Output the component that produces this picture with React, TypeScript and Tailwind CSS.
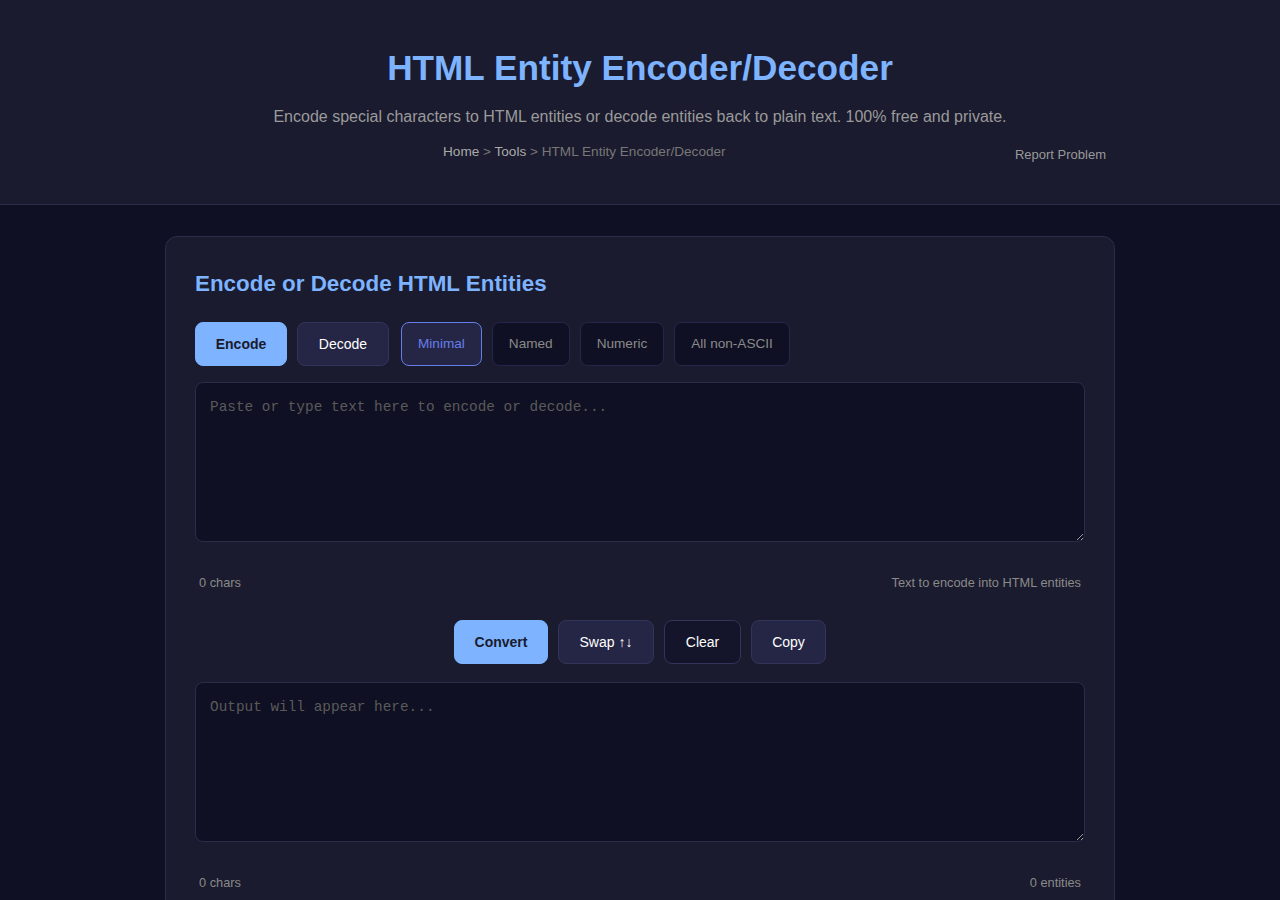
import React, { useState } from 'react';

type Mode = 'encode' | 'decode';
type Scope = 'minimal' | 'named' | 'numeric' | 'ascii';

const scopes: { id: Scope; label: string }[] = [
  { id: 'minimal', label: 'Minimal' },
  { id: 'named', label: 'Named' },
  { id: 'numeric', label: 'Numeric' },
  { id: 'ascii', label: 'All non-ASCII' },
];

const font = "font-['Liberation_Sans',Arial,sans-serif]";

const App: React.FC = () => {
  const [mode, setMode] = useState<Mode>('encode');
  const [scope, setScope] = useState<Scope>('minimal');
  const [input, setInput] = useState('');
  const [output, setOutput] = useState('');

  const entityCount = (output.match(/&[#a-zA-Z0-9]+;/g) || []).length;

  return (
    <div className={`min-h-screen bg-[#0f1023] ${font}`}>
      {/* 상단 헤더 */}
      <header className="bg-[#1a1b2e] border-b border-[#2b2c4c] pt-[48px] pb-[42px]">
        <h1 className="text-center text-[35.2px] leading-[40px] font-bold text-[#7db3ff]">
          HTML Entity Encoder/Decoder
        </h1>
        <p className="mt-[20px] text-center text-[16px] leading-[18px] text-[#9a9a9a]">
          Encode special characters to HTML entities or decode entities back to plain text. 100% free and private.
        </p>
        <div className="mx-auto mt-[18px] flex w-[932px] items-start">
          <nav className="ml-[269px] text-[13.6px] leading-[16px] text-[#777]">
            <a className="text-[#aaa]">Home</a> &gt; <a className="text-[#aaa]">Tools</a> &gt; HTML Entity Encoder/Decoder
          </nav>
          <a className="ml-auto mt-[3px] text-[13px] leading-[15px] text-[#999]">Report Problem</a>
        </div>
      </header>

      <main className="pt-[31px] pb-10">
        <section className="mx-auto w-[950px] rounded-[12px] border border-[#2b2c4c] bg-[#1a1b2e] px-[29px] pt-[34px] pb-8">
          <h2 className="text-[22.4px] leading-[26px] font-bold text-[#7db3ff]">Encode or Decode HTML Entities</h2>

          <div className="mt-[25px] flex items-center">
            <div className="flex gap-[10px]">
              <button
                onClick={() => setMode('encode')}
                className={`h-11 w-[92px] rounded-[8px] border text-[14px] ${
                  mode === 'encode'
                    ? 'border-[#7db3ff] bg-[#7db3ff] font-bold text-[#1a1b2e]'
                    : 'border-[#33345a] bg-[#252645] text-white'
                }`}
              >
                Encode
              </button>
              <button
                onClick={() => setMode('decode')}
                className={`h-11 w-[92px] rounded-[8px] border text-[14px] ${
                  mode === 'decode'
                    ? 'border-[#7db3ff] bg-[#7db3ff] font-bold text-[#1a1b2e]'
                    : 'border-[#33345a] bg-[#252645] text-white'
                }`}
              >
                Decode
              </button>
            </div>
            <div className="ml-3 flex gap-[10px]">
              {scopes.map(s => (
                <button
                  key={s.id}
                  onClick={() => setScope(s.id)}
                  className={`h-11 rounded-[8px] border px-4 text-[13.6px] ${
                    scope === s.id
                      ? 'border-[#667eea] bg-[#252645] text-[#667eea]'
                      : 'border-[#25264a] bg-[#0f1023] text-[#8a8a8a]'
                  }`}
                >
                  {s.label}
                </button>
              ))}
            </div>
          </div>

          <textarea
            value={input}
            onChange={e => setInput(e.target.value)}
            placeholder="Paste or type text here to encode or decode..."
            className="mt-4 block h-[160px] w-full rounded-[8px] border border-[#2b2c4c] bg-[#0f1023] px-[14px] py-[14px] font-['Liberation_Mono','Courier_New',monospace] text-[14.4px] leading-[20px] text-[#ddd] placeholder:text-[#5a5a5a] outline-none"
          />
          <div className="mt-[33px] flex justify-between px-1 text-[12.8px] leading-[15px] text-[#8a8a8a]">
            <span>{input.length} chars</span>
            <span>Text to encode into HTML entities</span>
          </div>

          <div className="mt-[30px] flex justify-center gap-[10px]">
            <button className="h-11 w-[94px] rounded-[8px] border border-[#7db3ff] bg-[#7db3ff] text-[14px] font-bold text-[#1a1b2e]">
              Convert
            </button>
            <button className="h-11 w-[96px] rounded-[8px] border border-[#33345a] bg-[#252645] text-[14px] text-white">
              Swap ↑↓
            </button>
            <button
              onClick={() => {
                setInput('');
                setOutput('');
              }}
              className="h-11 w-[77px] rounded-[8px] border border-[#33345a] bg-[#14152a] text-[14px] text-white"
            >
              Clear
            </button>
            <button className="h-11 w-[75px] rounded-[8px] border border-[#33345a] bg-[#252645] text-[14px] text-white">
              Copy
            </button>
          </div>

          <textarea
            value={output}
            readOnly
            placeholder="Output will appear here..."
            className="mt-[18px] block h-[160px] w-full rounded-[8px] border border-[#2b2c4c] bg-[#0f1023] px-[14px] py-[14px] font-['Liberation_Mono','Courier_New',monospace] text-[14.4px] leading-[20px] text-[#ddd] placeholder:text-[#5a5a5a] outline-none"
          />
          <div className="mt-[33px] flex justify-between px-1 text-[12.8px] leading-[15px] text-[#8a8a8a]">
            <span>{output.length} chars</span>
            <span>{entityCount} entities</span>
          </div>
        </section>
      </main>
    </div>
  );
};

export default App;
